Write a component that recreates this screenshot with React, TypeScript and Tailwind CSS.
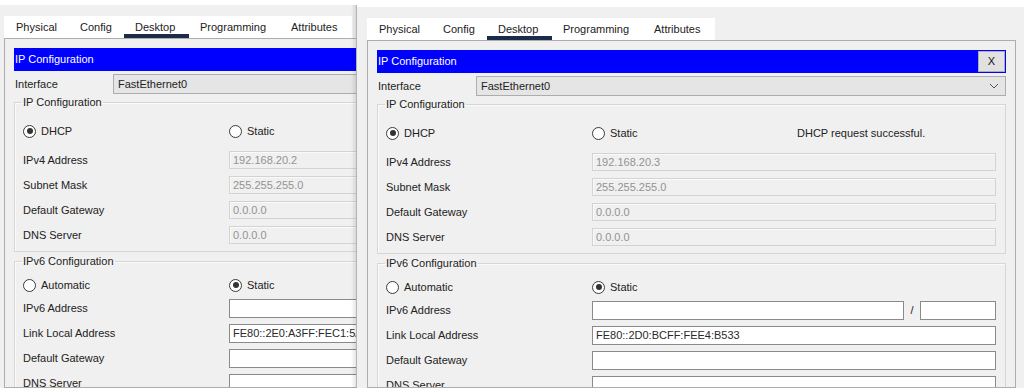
import React from 'react';

type WinData = {
  ipv4: string;
  linkLocal: string;
  showMsg: boolean;
};

const tabs = [
  { name: 'Physical', w: 'w-[64px] pl-[12px]' },
  { name: 'Config', w: 'w-[56px] pl-[12px]' },
  { name: 'Desktop', w: 'w-[65px] pl-[11px]' },
  { name: 'Programming', w: 'w-[90px] pl-[11px]' },
  { name: 'Attributes', w: 'w-[73px] pl-[12px]' },
];

function Radio({ checked, label }: { checked?: boolean; label: string }) {
  return (
    <span className="flex items-center gap-[5px]">
      <span className="flex h-[13px] w-[13px] items-center justify-center rounded-full border border-[#3a3a3a] bg-white">
        {checked && <span className="h-[6px] w-[6px] rounded-full bg-[#333]" />}
      </span>
      <span>{label}</span>
    </span>
  );
}

function Input({ value, disabled, className }: { value?: string; disabled?: boolean; className?: string }) {
  if (disabled) {
    return (
      <div className={`flex h-full items-center border border-[#d3d3d3] bg-[#f0f0f0] pl-[3px] text-[#939393] shadow-[inset_1px_1px_0_#fafafa] ${className ?? ''}`}>
        {value}
      </div>
    );
  }
  return (
    <div className={`flex h-full items-center border border-[#8a8a8a] bg-white pl-[3px] text-[#2a2a2a] ${className ?? ''}`}>
      {value}
    </div>
  );
}

function Row({ label, children, h }: { label: string; children: React.ReactNode; h: string }) {
  return (
    <div className={`flex items-center ${h}`}>
      <div className="w-[206px] shrink-0">{label}</div>
      <div className="flex h-full min-w-0 flex-1 items-center">{children}</div>
    </div>
  );
}

function Group({ title, children }: { title: string; children: React.ReactNode }) {
  return (
    <fieldset className="border border-[#d6d6d6] shadow-[inset_1px_1px_0_#fbfbfb]">
      <legend className="ml-[7px] px-[1px] leading-[16px] text-[#222]">{title}</legend>
      {children}
    </fieldset>
  );
}

function PTWindow({ d }: { d: WinData }) {
  return (
    <div className="flex h-full w-[667px] shrink-0 flex-col bg-[#f0f0f0]">
      <div className="h-[7px] shrink-0 bg-white" />
      <div className="flex min-h-0 flex-1 flex-col pl-[10px] pr-[8px] pt-[11px]">
        {/* tab strip */}
        <div className="flex h-[22px] w-[348px] shrink-0 bg-white">
          {tabs.map(t => (
            <div key={t.name} className={`relative flex items-center ${t.w}`}>
              <span className="text-[#222]">{t.name}</span>
              {t.name === 'Desktop' && (
                <span className="absolute bottom-0 left-0 h-[4px] w-full bg-[#1c2b49]" />
              )}
            </div>
          ))}
        </div>

        {/* panel */}
        <div className="min-h-0 flex-1 overflow-hidden border border-[#adadad] bg-[#f0f0f0] px-[9px] pt-[9px]">
          <div className="flex h-[23px] items-center justify-between bg-[#0000ff] pl-[1px] text-white">
            <span>IP Configuration</span>
            <div className="mr-[1px] flex h-[21px] w-[27px] items-center justify-center border border-[#adadad] bg-[#e1e1e1] text-[#111]">
              X
            </div>
          </div>

          <div className="mt-[3px] flex h-[20px] items-center">
            <div className="w-[99px] shrink-0 pl-[1px] text-[#222]">Interface</div>
            <div className="flex h-full flex-1 items-center justify-between border border-[#adadad] bg-[#e5e5e5] pl-[4px] pr-[6px] text-[#222]">
              <span>FastEthernet0</span>
              <svg width="10" height="6" viewBox="0 0 10 6" fill="none">
                <path d="M1 1 L5 5 L9 1" stroke="#555" strokeWidth="1" />
              </svg>
            </div>
          </div>

          <Group title="IP Configuration">
            <div className="pb-[7px] pl-[8px] pr-[9px] text-[#222]">
              <div className="mt-[11px] flex h-[20px] items-center">
                <div className="w-[206px] shrink-0">
                  <Radio checked label="DHCP" />
                </div>
                <div className="w-[205px] shrink-0">
                  <Radio label="Static" />
                </div>
                {d.showMsg && <span>DHCP request successful.</span>}
              </div>
              <div className="mt-[10px] flex flex-col gap-[7px]">
                <Row label="IPv4 Address" h="h-[18px]">
                  <Input disabled value={d.ipv4} className="w-full" />
                </Row>
                <Row label="Subnet Mask" h="h-[18px]">
                  <Input disabled value="255.255.255.0" className="w-full" />
                </Row>
                <Row label="Default Gateway" h="h-[18px]">
                  <Input disabled value="0.0.0.0" className="w-full" />
                </Row>
                <Row label="DNS Server" h="h-[18px]">
                  <Input disabled value="0.0.0.0" className="w-full" />
                </Row>
              </div>
            </div>
          </Group>

          <div className="mt-[1px]">
            <Group title="IPv6 Configuration">
              <div className="pb-[7px] pl-[8px] pr-[9px] text-[#222]">
                <div className="mt-[6px] flex h-[20px] items-center">
                  <div className="w-[206px] shrink-0">
                    <Radio label="Automatic" />
                  </div>
                  <Radio checked label="Static" />
                </div>
                <div className="mt-[4px] flex flex-col gap-[6px]">
                  <Row label="IPv6 Address" h="h-[19px]">
                    <Input className="min-w-0 flex-1" />
                    <span className="w-[16px] text-center">/</span>
                    <Input className="w-[76px] shrink-0" />
                  </Row>
                  <Row label="Link Local Address" h="h-[19px]">
                    <Input value={d.linkLocal} className="w-full" />
                  </Row>
                  <Row label="Default Gateway" h="h-[19px]">
                    <Input className="w-full" />
                  </Row>
                  <Row label="DNS Server" h="h-[19px]">
                    <Input className="w-full" />
                  </Row>
                </div>
              </div>
            </Group>
          </div>
        </div>
      </div>
    </div>
  );
}

export default function App() {
  return (
    <div className="flex h-[388px] w-[1024px] overflow-hidden bg-white font-['Liberation_Sans',Arial,sans-serif] text-[11px] leading-none">
      {/* back window, covered by the front one */}
      <div className="relative h-full w-[357px] shrink-0 overflow-hidden">
        <div className="-ml-[6px] -mt-[2px] h-[calc(100%+2px)]">
          <PTWindow d={{ ipv4: '192.168.20.2', linkLocal: 'FE80::2E0:A3FF:FEC1:5A', showMsg: false }} />
        </div>
        <div className="absolute right-0 top-[5px] bottom-0 w-[6px] border-r border-[#b4b4b4] bg-linear-to-r from-transparent to-black/10" />
      </div>
      {/* front window */}
      <PTWindow d={{ ipv4: '192.168.20.3', linkLocal: 'FE80::2D0:BCFF:FEE4:B533', showMsg: true }} />
    </div>
  );
}
